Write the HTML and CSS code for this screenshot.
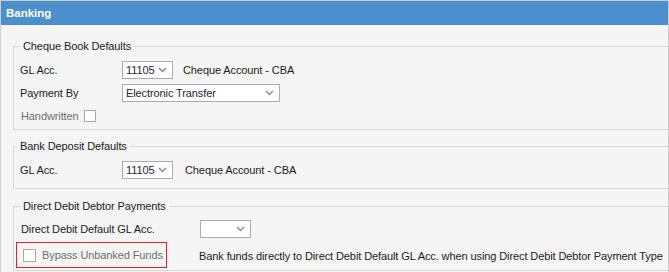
FILE: index.html
```html
<!DOCTYPE html>
<html lang="en">
<head>
  <meta charset="UTF-8" />
  <title>Banking</title>
  <link rel="stylesheet" href="styles.css">
</head>
<body>
  <div class="window">
    <div class="window-title">Banking</div>

    <div class="window-body">
      <!-- Cheque Book -->
      <fieldset class="group group-cheque">
        <legend>Cheque Book Defaults</legend>
        <div class="row">
          <span class="label">GL Acc.</span>
          <div class="combo combo-small"><span>11105</span><svg width="9" height="6" viewBox="0 0 9 6"><polyline points="1,1 4.5,4.5 8,1" /></svg></div>
          <span class="acc-name">Cheque Account - CBA</span>
        </div>
        <div class="row">
          <span class="label">Payment By</span>
          <div class="combo combo-wide"><span>Electronic Transfer</span><svg width="9" height="6" viewBox="0 0 9 6"><polyline points="1,1 4.5,4.5 8,1" /></svg></div>
        </div>
        <div class="row">
          <span class="muted">Handwritten</span>
          <span class="check"></span>
        </div>
      </fieldset>

      <!-- Bank Deposit -->
      <fieldset class="group group-deposit">
        <legend>Bank Deposit Defaults</legend>
        <div class="row">
          <span class="label">GL Acc.</span>
          <div class="combo combo-small"><span>11105</span><svg width="9" height="6" viewBox="0 0 9 6"><polyline points="1,1 4.5,4.5 8,1" /></svg></div>
          <span class="acc-name acc-name-wide">Cheque Account - CBA</span>
        </div>
      </fieldset>

      <!-- Direct Debit -->
      <fieldset class="group group-debit">
        <legend>Direct Debit Debtor Payments</legend>
        <div class="row">
          <span class="label label-long">Direct Debit Default GL Acc.</span>
          <div class="combo combo-small"><span></span><svg width="9" height="6" viewBox="0 0 9 6"><polyline points="1,1 4.5,4.5 8,1" /></svg></div>
        </div>
        <div class="row row-bypass">
          <div class="highlight">
            <span class="check"></span>
            <span class="muted">Bypass Unbanked Funds</span>
          </div>
          <span class="hint">Bank funds directly to Direct Debit Default GL Acc. when using Direct Debit Debtor Payment Type</span>
        </div>
      </fieldset>
    </div>
  </div>
</body>
</html>
```
FILE: styles.css
```css
body {
  margin: 0;
  padding: 0;
  background-color: #fff;
  font-family: "Liberation Sans", Arial, sans-serif;
  font-size: 11px;
  letter-spacing: -0.1px;
  color: #1b1b1b;
}

.window {
  width: 667px;
  height: 280px;
  border: 1px solid #cdcdcd;
  background-color: #f5f5f5;
  overflow: hidden;
}

.window-title {
  height: 24px;
  line-height: 24px;
  padding-left: 5px;
  background-color: #4b8fcc;
  color: #fff;
  font-weight: bold;
  font-size: 11.5px;
  letter-spacing: 0;
}

.window-body {
  padding-left: 12px;
}

.group {
  width: 700px;
  margin: 0;
  padding: 0 0 0 6px;
  border: 1px solid #d6d6d6;
  box-sizing: border-box;
}

.group legend {
  padding: 0 3px;
  line-height: 14px;
}

.group-cheque {
  margin-top: 14px;
  padding-top: 7px;
  padding-bottom: 3px;
}

.group-deposit {
  margin-top: 9px;
  padding-top: 7px;
  padding-bottom: 8px;
}

.group-deposit legend {
  margin-left: -3px;
}

.group-debit {
  margin-top: 10px;
  padding-top: 6px;
  padding-bottom: 2px;
}

.row {
  display: flex;
  align-items: center;
  height: 20px;
  margin-bottom: 3px;
  white-space: nowrap;
}

.row:last-child {
  margin-bottom: 0;
}

.label {
  width: 102px;
  flex-shrink: 0;
}

.label-long {
  width: 180px;
  padding-left: 1px;
  box-sizing: border-box;
}

.combo {
  display: flex;
  align-items: center;
  justify-content: space-between;
  height: 18px;
  padding: 0 5px 0 3px;
  border: 1px solid #acacac;
  background-color: #fff;
  box-sizing: border-box;
  color: #22243a;
}

.combo svg polyline {
  fill: none;
  stroke: #8a8a8a;
  stroke-width: 1.4;
}

.combo-small {
  width: 51px;
}

.combo-wide {
  width: 158px;
}

.acc-name {
  margin-left: 10px;
}

.acc-name-wide {
  margin-left: 12px;
}

.muted {
  color: #6e6e6e;
  padding-left: 1px;
}

.check {
  display: inline-block;
  width: 12px;
  height: 12px;
  margin-left: 5px;
  border: 1px solid #a9a9a9;
  background-color: #fff;
  box-sizing: border-box;
}

.row-bypass {
  height: 26px;
}

.highlight {
  display: flex;
  align-items: center;
  gap: 5px;
  width: 151px;
  height: 26px;
  margin-left: -4px;
  padding-left: 6px;
  border: 1px solid #e02424;
  box-sizing: border-box;
}

.highlight .check {
  width: 13px;
  height: 13px;
  margin-left: 0;
}

.hint {
  margin-left: 32px;
  padding-top: 2px;
}
```
